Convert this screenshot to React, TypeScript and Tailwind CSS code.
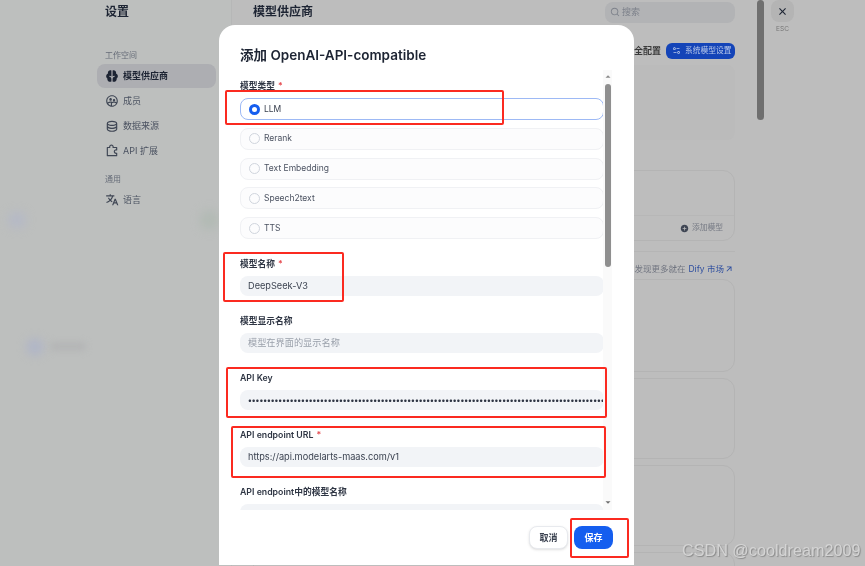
import React from 'react';
import {
  RiAddCircleFill,
  RiArrowDownSFill,
  RiArrowRightUpLine,
  RiArrowUpSFill,
  RiBrainFill,
  RiCloseLine,
  RiDatabase2Line,
  RiEqualizer2Line,
  RiGroup2Line,
  RiPuzzle2Line,
  RiSearchLine,
  RiTranslate2,
} from 'react-icons/ri';

const font = { fontFamily: 'Inter, "Noto Sans CJK SC", sans-serif' };

const navTop = [
  { label: '模型供应商', icon: RiBrainFill, active: true },
  { label: '成员', icon: RiGroup2Line },
  { label: '数据来源', icon: RiDatabase2Line },
  { label: 'API 扩展', icon: RiPuzzle2Line },
];

const modelTypes = ['LLM', 'Rerank', 'Text Embedding', 'Speech2text', 'TTS'];

const NavItem = ({ label, icon: Icon, active }: { label: string; icon: React.ElementType; active?: boolean }) => (
  <div className={`flex h-6 items-center gap-[4px] rounded-lg pl-[8px] text-[9px] ${active ? 'bg-[#adaeb2] font-semibold text-[#1d2433]' : 'text-[#4b5261]'}`}>
    <Icon size={14} className={active ? 'text-[#1d2433]' : 'text-[#3f4654]'} />
    {label}
  </div>
);

const Field = ({ label, required, children, className }: { label: string; required?: boolean; children?: React.ReactNode; className?: string }) => (
  <div className={className}>
    <div className="flex h-[12px] items-center text-[8.75px] font-semibold text-[#2f3644]">
      {label}
      {required && <span className="ml-[3px] text-[#e5484d]">*</span>}
    </div>
    <div className="mt-[4.5px] flex h-[20.5px] items-center overflow-hidden rounded-lg bg-[#f2f4f7] pl-2 text-[9.2px] text-[#3b4250]">
      {children}
    </div>
  </div>
);

const RedBox = ({ className }: { className: string }) => (
  <div className={`absolute rounded-[2px] border-2 border-[#fb2a20] ${className}`} />
);

const App = () => {
  return (
    <div className="relative flex h-[566px] w-[865px] overflow-hidden bg-[#bdbdbd] blur-[0.4px]" style={font}>
      {/* settings sidebar */}
      <aside className="flex w-[232px] shrink-0 flex-col border-r border-[#b6b7b7] bg-[#bdbfbe] pl-[97px] pr-[15px]">
        <h1 className="ml-2 mt-[3px] text-[12px] leading-[18px] font-bold text-[#1d2433]">设置</h1>
        <div className="ml-2 mt-[28px] text-[8px] leading-[12px] text-[#666c78]">工作空间</div>
        <nav className="mt-[3px] flex flex-col gap-px">
          {navTop.map((item) => (
            <NavItem key={item.label} {...item} />
          ))}
        </nav>
        <div className="ml-2 mt-[10px] text-[8px] leading-[12px] text-[#666c78]">通用</div>
        <div className="mt-[3px]">
          <NavItem label="语言" icon={RiTranslate2} />
        </div>
      </aside>

      {/* provider page behind the dialog */}
      <main className="flex w-[525px] shrink-0 flex-col pl-[21px] pr-[22px]">
        <div className="mt-px flex h-[22px] shrink-0 items-center justify-between">
          <h2 className="text-[12px] font-bold text-[#1d2433]">模型供应商</h2>
          <div className="flex h-[21px] w-[130px] items-center gap-[2px] rounded-lg bg-[#b2b3b5] pl-[5px] text-[9px] text-[#7c808a]">
            <RiSearchLine size={10} />
            搜索
          </div>
        </div>
        <div className="mt-[20px] flex h-[15px] shrink-0 items-center justify-end gap-[5px]">
          <span className="text-[9px] font-semibold text-[#3a3a3a]">安全配置</span>
          <div className="flex h-[16px] w-[69px] items-center gap-[4px] rounded-md bg-[#1444b8] pl-[6px] text-[7.75px] text-[#b8c8ea]">
            <RiEqualizer2Line size={9} />
            系统模型设置
          </div>
        </div>
        <div className="mt-[7px] h-[75px] shrink-0 rounded-lg bg-[#bbbbbb]" />
        <div className="mt-[30px] flex h-[71px] shrink-0 flex-col justify-end rounded-xl border border-[#b4b4b4]">
          <div className="flex h-[25px] items-center justify-end gap-[3px] border-t border-[#b7b7b7] pr-[11px] text-[7.75px] text-[#767a84]">
            <RiAddCircleFill size={9} className="text-[#3f4654]" />
            添加模型
          </div>
        </div>
        <div className="mt-[10px] h-px shrink-0 bg-[#b5b5b5]" />
        <div className="mt-[11px] flex h-[12px] shrink-0 items-center justify-end pr-px text-[8.5px] text-[#717580]">
          发现更多就在<span className="ml-[3px] text-[#2f4f9f]">Dify 市场</span>
          <RiArrowRightUpLine size={10} className="text-[#2f4f9f]" />
        </div>
        <div className="mt-[4px] flex shrink-0 flex-col gap-[6px]">
          <div className="h-[93px] rounded-xl border border-[#b4b4b4]" />
          <div className="h-[81px] rounded-xl border border-[#b4b4b4]" />
          <div className="h-[81px] rounded-xl border border-[#b4b4b4]" />
          <div className="h-[40px] rounded-xl border border-[#b4b4b4]" />
        </div>
      </main>

      {/* page scrollbar */}
      <div className="w-[7px] shrink-0">
        <div className="h-[120px] rounded-full bg-[#6f6f6f]" />
      </div>

      <div className="ml-[7px] flex w-[23px] flex-col items-center">
        <div className="flex h-[22px] w-[23px] items-center justify-center rounded-lg bg-[#b4b4b4]">
          <RiCloseLine size={13} className="text-[#1d2433]" />
        </div>
        <span className="mt-[3px] text-[6.5px] leading-[8px] text-[#777]">ESC</span>
      </div>

      {/* blurred remains of the page on the far left */}
      <div className="absolute left-[8px] top-[212px] h-[16px] w-[18px] rounded-full bg-[#b5b9c6] blur-[5px]" />
      <div className="absolute left-[200px] top-[210px] h-[20px] w-[19px] rounded-full bg-[#b2bab4] blur-[5px]" />
      <div className="absolute left-[26px] top-[338px] h-[18px] w-[18px] rounded-full bg-[#b1b6c6] blur-[4px]" />
      <div className="absolute left-[50px] top-[342px] h-[9px] w-[36px] rounded bg-[#b4b5b6] blur-[3px]" />

      {/* dialog */}
      <div className="absolute left-[219px] top-[25px] flex h-[540px] w-[415px] flex-col rounded-t-2xl bg-white">
        <h3 className="ml-[21px] mt-[20px] text-[13.5px] leading-[20px] font-semibold text-[#1d2433]">添加 OpenAI-API-compatible</h3>
        <div className="relative mt-[5px] h-[440px] overflow-hidden pl-[21px]">
          <div className="w-[364px] pt-[11px]">
            <div className="flex h-[12px] items-center text-[8.75px] font-semibold text-[#2f3644]">
              模型类型<span className="ml-[3px] text-[#e5484d]">*</span>
            </div>
            <div className="mt-[5px] flex flex-col gap-[7.75px]">
              {modelTypes.map((type, i) => (
                <div
                  key={type}
                  className={`flex h-[22px] items-center gap-[4px] rounded-lg border pl-2 text-[8.5px] ${
                    i === 0 ? 'border-[#9db9f5] text-[#3b4250]' : 'border-[#f0f1f4] bg-[#fcfcfd] text-[#4b5261]'
                  }`}
                >
                  <span className={`h-[11px] w-[11px] rounded-full ${i === 0 ? 'border-[3.5px] border-[#155eef]' : 'border border-[#d0d5dd]'}`} />
                  {type}
                </div>
              ))}
            </div>
            <Field label="模型名称" required className="mt-[20px]">
              DeepSeek-V3
            </Field>
            <Field label="模型显示名称" className="mt-[20px]">
              <span className="text-[#9aa0ab]">模型在界面的显示名称</span>
            </Field>
            <Field label="API Key" className="mt-[20px]">
              <span className="whitespace-nowrap text-[8px] font-bold text-[#2f3644]">{'•'.repeat(100)}</span>
            </Field>
            <Field label="API endpoint URL" required className="mt-[20px]">
              https://api.modelarts-maas.com/v1
            </Field>
            <Field label="API endpoint中的模型名称" className="mt-[20px]" />
          </div>
          {/* dialog scrollbar */}
          <div className="absolute right-[22px] top-0 flex h-[440px] w-[9px] flex-col items-center bg-[#fafafa]">
            <RiArrowUpSFill size={10} className="mt-[2px] text-[#8a8a8a]" />
            <div className="mt-[2px] h-[183px] w-[6px] rounded-full bg-[#8f8f8f]" />
            <div className="flex-1" />
            <RiArrowDownSFill size={10} className="mb-[3px] text-[#6f6f6f]" />
          </div>
        </div>
        <div className="mt-[16px] flex justify-end gap-[6px] pr-[21px]">
          <button className="h-[23px] w-[39px] rounded-lg border border-[#e8eaee] bg-white text-[9px] font-semibold text-[#3b4250] shadow-sm">取消</button>
          <button className="h-[23px] w-[39px] rounded-lg bg-[#155eef] text-[9px] font-semibold text-white">保存</button>
        </div>
      </div>

      {/* red annotation boxes */}
      <RedBox className="left-[225px] top-[90px] h-[35px] w-[279px]" />
      <RedBox className="left-[223px] top-[252px] h-[50px] w-[121px]" />
      <RedBox className="left-[226px] top-[367px] h-[51px] w-[381px]" />
      <RedBox className="left-[231px] top-[426px] h-[52px] w-[375px]" />
      <RedBox className="left-[570px] top-[518px] h-[40px] w-[59px]" />

      {/* watermark */}
      <div className="absolute left-[682px] top-[540px] whitespace-nowrap text-[16.2px] leading-[20px] text-[#d4d4d4] [font-family:'Liberation_Sans',sans-serif] [text-shadow:1px_1px_1px_#8a8a8a]">
        CSDN @cooldream2009
      </div>
    </div>
  );
};

export default App;
